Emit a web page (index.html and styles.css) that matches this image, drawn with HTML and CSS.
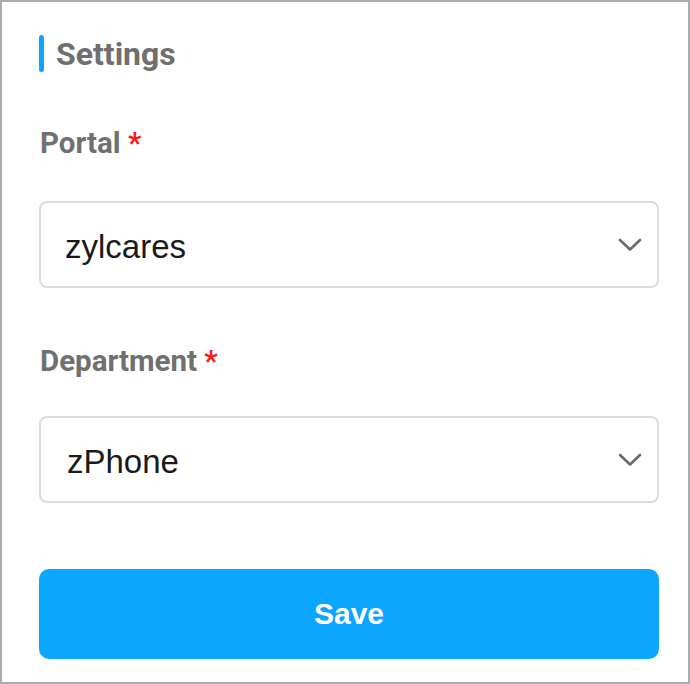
FILE: index.html
```html
<!DOCTYPE html>
<html>
<head>
<meta charset="utf-8">
<link rel="stylesheet" href="styles.css">
</head>
<body>
<div class="frame">
  <div class="title"><span class="bar"></span><span class="title-text">Settings</span></div>
  <div class="field">
    <div class="label">Portal <span class="req">*</span></div>
    <div class="select">
      <span class="value">zylcares</span>
      <svg class="chev" width="24" height="14" viewBox="0 0 24 14"><path d="M2 2 L12 11.5 L22 2" fill="none" stroke="#6b6b6b" stroke-width="2.6" stroke-linecap="round" stroke-linejoin="round"/></svg>
    </div>
  </div>
  <div class="field second">
    <div class="label">Department <span class="req">*</span></div>
    <div class="select">
      <span class="value">zPhone</span>
      <svg class="chev" width="24" height="14" viewBox="0 0 24 14"><path d="M2 2 L12 11.5 L22 2" fill="none" stroke="#6b6b6b" stroke-width="2.6" stroke-linecap="round" stroke-linejoin="round"/></svg>
    </div>
  </div>
  <button class="save">Save</button>
</div>
</body>
</html>
```

FILE: styles.css
```css
html, body { margin: 0; padding: 0; background: #fff; }
.frame {
  box-sizing: border-box;
  width: 690px;
  height: 684px;
  border: 2px solid #a9adb0;
  padding: 31px 29px 0 37px;
  display: flex;
  flex-direction: column;
}
.title { display: flex; align-items: center; height: 41px; }
.bar { width: 5px; height: 37px; border-radius: 3px; background: #0ba6ff; margin-right: 12px; }
.title-text { font-family: Roboto, sans-serif; font-weight: 700; font-size: 32px; color: #6f6f6f; }
.field { display: flex; flex-direction: column; }
.label { font-family: Roboto, sans-serif; font-weight: 700; font-size: 29.5px; color: #707070; margin-top: 52px; line-height: 34px; padding-left: 1px; }
.req { color: #ff1a1a; }
.select {
  box-sizing: border-box;
  margin-top: 41px;
  height: 87px;
  border: 2px solid #dcdcdc;
  border-radius: 8px;
  display: flex;
  align-items: center;
  justify-content: space-between;
  padding: 0 15px 0 24px;
}
.value { font-family: "Liberation Sans", Arial, sans-serif; font-size: 33px; color: #1a1a1a; padding-top: 4px; }
.second .value { padding-left: 2px; }
.second .label { margin-top: 56px; }
.second .select { margin-top: 38px; }
.save {
  margin-top: 66px;
  height: 90px;
  border: none;
  border-radius: 10px;
  background: #0ba6ff;
  color: #fff;
  font-family: "Liberation Sans", Arial, sans-serif;
  font-weight: 700;
  font-size: 30px;
}
```
